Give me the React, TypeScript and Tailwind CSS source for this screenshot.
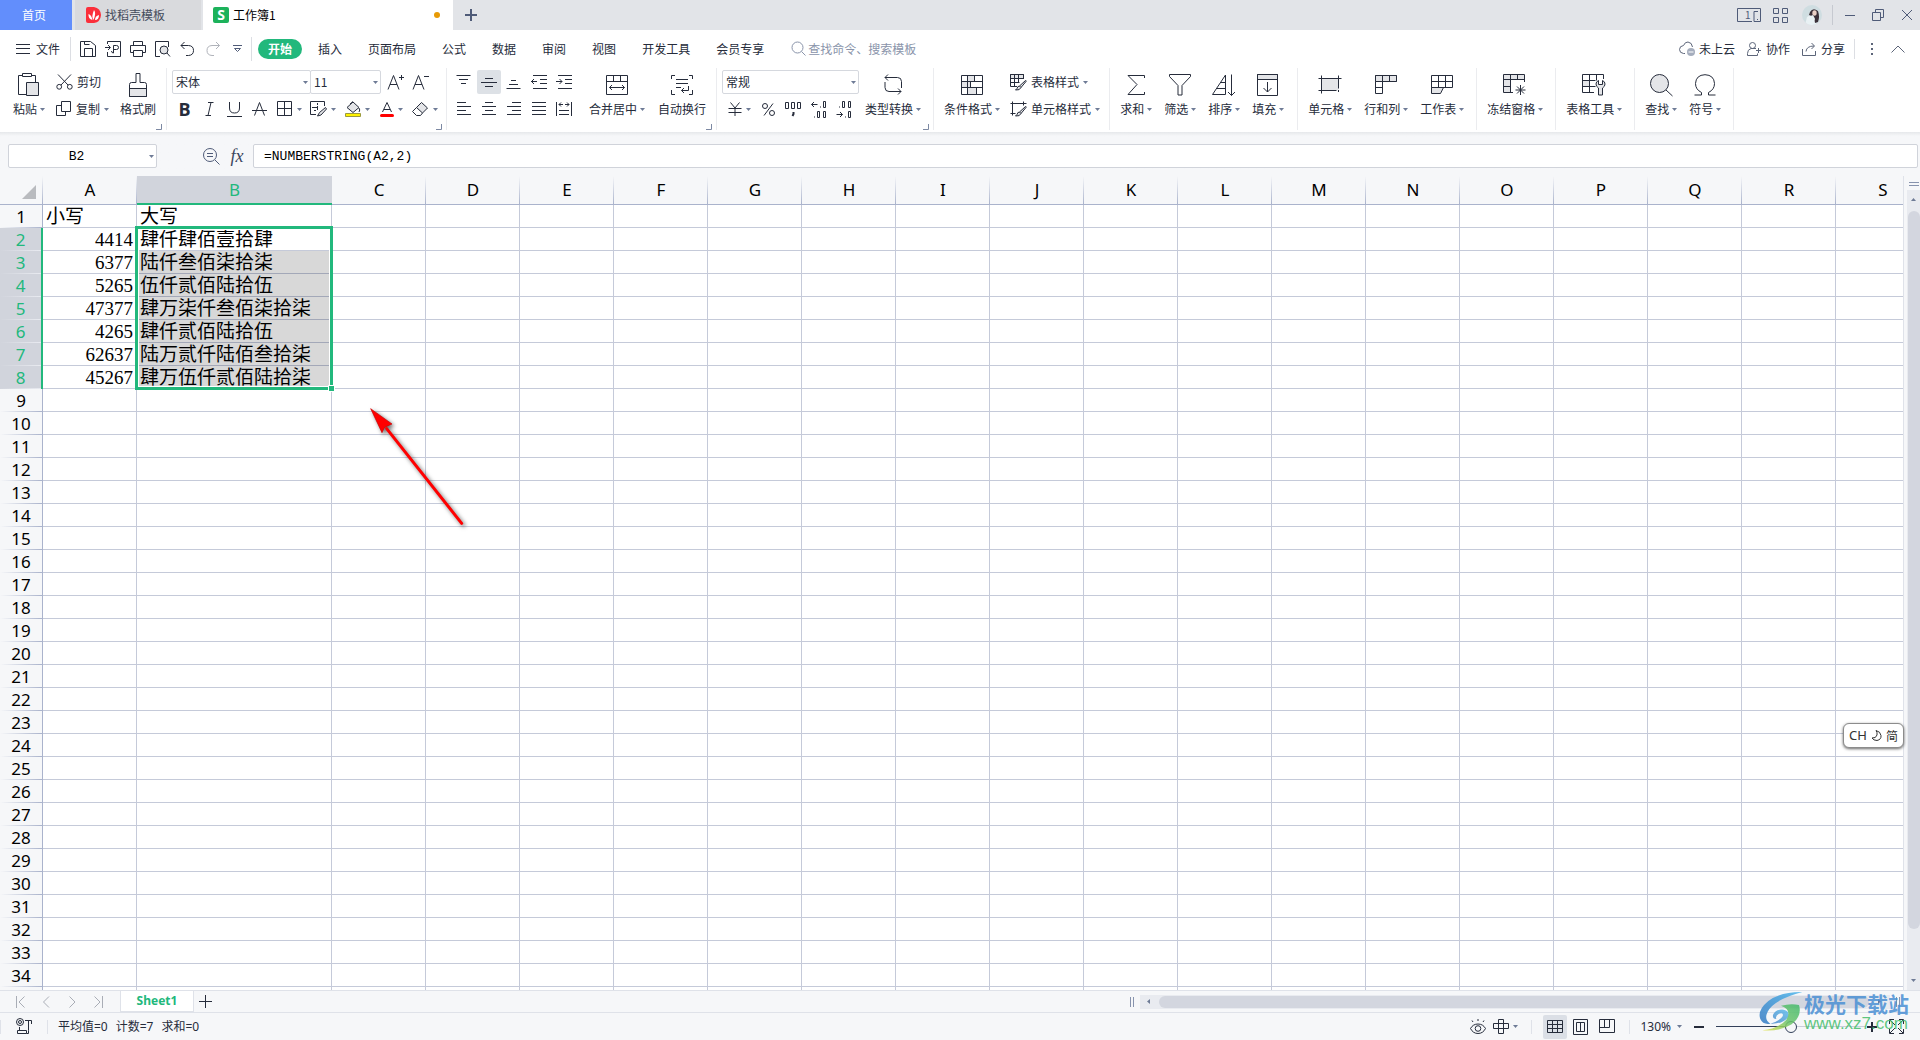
// App.tsx

import React, { useState } from "react";
import clsx from "clsx";

type IconProps = { w: number; h: number; className?: string; children: React.ReactNode };

function Icon({ w, h, className, children }: IconProps) {
  return (
    <svg
      width={w}
      height={h}
      viewBox={`0 0 ${w} ${h}`}
      fill="none"
      stroke="currentColor"
      className={clsx("shrink-0", className)}
      aria-hidden="true"
    >
      {children}
    </svg>
  );
}

const GREY = "#e4e5e8";

function Caret({ className }: { className?: string }) {
  return (
    <svg width="5" height="3" viewBox="0 0 5 3" className={clsx("shrink-0 fill-[#6e7b96]", className)} aria-hidden="true">
      <path d="M0 0h5L2.5 3z" />
    </svg>
  );
}

/* ---------- ribbon icons ---------- */

const icons = {
  paste: (
    <Icon w={22} h={24}>
      <path d="M4.5 2.5h-4v19h8M13.5 2.5h4v7" />
      <path d="M4.5 .5h9v3h-9z" />
      <path d="M8.5 9.5h12v13h-12z" fill={GREY} />
    </Icon>
  ),
  cut: (
    <Icon w={17} h={16}>
      <circle cx="3.2" cy="12.8" r="2.4" />
      <circle cx="13.8" cy="12.8" r="2.4" />
      <path d="M2 .5l10 10.5M15 .5L5 11" />
    </Icon>
  ),
  copy: (
    <Icon w={16} h={16}>
      <path d="M5.5 .5h9v10h-9zM5.5 4.5h-5v10h9v-4" />
    </Icon>
  ),
  brush: (
    <Icon w={18} h={24}>
      <path d="M.5 15.5h17v8H.5z" fill={GREY} />
      <path d="M7 .5h4v9h4.500q2 0 2 2v12H.5v-12q0-2 2-2H7z" />
    </Icon>
  ),
  merge: (
    <Icon w={22} h={20}>
      <path d="M.5 .5h21v19H.5zM.5 6.5h21M7.5 .5v6M14.5 .5v6M3.5 12.5h15M6 10l-2.5 2.5L6 15M16 10l2.5 2.5L16 15" />
    </Icon>
  ),
  wrap: (
    <Icon w={22} h={20}>
      <path d="M4 .5H.5V4M18 .5h3.5V4M4 19.5H.5V15M18 19.5h3.5V15M5 4.5h12M5 8.5h12M5 12.5h5M17.5 11v4.5h-7M13 13l-2.5 2.5L13 18" />
    </Icon>
  ),
  convert: (
    <Icon w={18} h={22}>
      <path d="M4 .5l-3 3 3 3M1 3.5h12.5q4 0 4 4V14M1 8v5.5q0 4 4 4h12M14 14.5l3 3-3 3" />
    </Icon>
  ),
  condFormat: (
    <Icon w={22} h={20}>
      <path d="M6.5 .5h7v6h-7zM.5 6.5h9v6h-9zM6.5 12.5h9v7h-9z" fill={GREY} />
      <path d="M.5 .5h21v19H.5zM.5 6.5h21M.5 12.5h21M6.5 .5v12M13.5 .5v6M9.5 6.5v6M6.5 12.5v7M15.5 12.5v7" />
    </Icon>
  ),
  tableStyle: (
    <Icon w={17} h={17}>
      <path d="M.5 .5h13v4H.5z" fill={GREY} />
      <path d="M7 12.5H.5V.5h13V5M.5 4.5h13M.5 8.5h9M4.5 .5v12M8.5 .5v8" />
      <path d="M15.5 6.5l-6 5.5 1.5 1.5 5-6q.5-1-.5-1M9.5 12q-2 0-2.5 2.5l-1.5 1.5q4.5 .5 5.5-2.5" fill={GREY} />
    </Icon>
  ),
  cellStyle: (
    <Icon w={17} h={16}>
      <path d="M.5 2.5h16M2.5 .5v14M.5 12.5h5M13.5 .5v4" />
      <path d="M15.5 5.5l-6 5.5 1.5 1.5 5-6q.5-1-.5-1M9.5 11q-2 0-2.5 2.5L5.5 15q4.5 .5 5.5-2.5" fill={GREY} />
    </Icon>
  ),
  sum: (
    <Icon w={18} h={22}>
      <path d="M17.5 4V1.5H1l9 9-9 10h16.5V18" />
    </Icon>
  ),
  filter: (
    <Icon w={22} h={22}>
      <path d="M.5 .5h21v2L13 11.5V21H9v-9.5L.5 2.5z" />
    </Icon>
  ),
  sort: (
    <Icon w={24} h={22}>
      <path d="M13.5 20.5H.5L13.5 1zM9 8.5h4.5M5 14.5h8.5M19.5 .5v21M16 18l3.5 3.5L23 18" />
    </Icon>
  ),
  fill: (
    <Icon w={22} h={22}>
      <path d="M.5 .5h20v5H.5z" fill={GREY} />
      <path d="M.5 .5h20v21H.5zM10.5 8v10M6.5 14l4 4 4-4" />
    </Icon>
  ),
  cell: (
    <Icon w={24} h={20}>
      <path d="M3.5 3.5h17v12h-17z" fill={GREY} stroke="none" />
      <path d="M.5 3.5h23M.5 15.5h18M3.5 .5v18M20.5 .5v13M20.5 15v2" />
    </Icon>
  ),
  rowCol: (
    <Icon w={22} h={20}>
      <path d="M.5 .5h21v6h-14v12h-7z" fill="#fff" />
      <path d="M.5 .5h21v6H.5z" fill={GREY} />
      <path d="M7.5 .5v6M14.5 .5v6M.5 12.5h7" />
    </Icon>
  ),
  sheet: (
    <Icon w={22} h={20}>
      <path d="M.5 12.5h12l-3 6h-9z" fill={GREY} />
      <path d="M.5 .5h21v12H.5zM.5 6.5h21M7.5 .5v12M14.5 .5v12" />
    </Icon>
  ),
  freeze: (
    <Icon w={24} h={22}>
      <path d="M.5 .5h21v5h-14v13h-7z" fill={GREY} stroke="none" />
      <path d="M10 18.5H.5V.5h21V8M.5 5.5h21M.5 12.5h7M7.5 .5v18M14.5 .5v5" />
      <path d="M17.5 11v10M12.5 16h10M14 12.5l7 7M21 12.5l-7 7" />
    </Icon>
  ),
  tableTools: (
    <Icon w={24} h={22}>
      <path d="M.5 6.5h7v6h-7z" fill={GREY} />
      <path d="M12 18.5H.5V.5h21V5M.5 6.5h13M.5 12.5h13M7.5 .5v18M14.5 .5v6" />
      <path d="M16.5 21v-7q-2.5-1.5-2.5-4t2.5-3.5v4h4v-4q2.500 1 2.500 3.500t-2.500 4v7z" fill={GREY} />
    </Icon>
  ),
  find: (
    <Icon w={23} h={23}>
      <circle cx="9.5" cy="9.5" r="9" fill={GREY} />
      <path d="M16 16l6.5 6" />
    </Icon>
  ),
  omega: (
    <Icon w={22} h={22}>
      <path d="M.5 21h7v-2.500Q1.500 15.500 1.500 9.500 2 1 11 .7q9 .3 9.500 8.800 0 6-6 9V21h7" />
    </Icon>
  ),
};

const alignIcons: [string, string][] = [
  ["顶端对齐", "M.5 1.5h14M3 5.5h9M5 9.5h5"],
  ["垂直居中", "M4 4.5h8M0 8.5h16M4 12.5h8"],
  ["底端对齐", "M5 6.5h5M3 10.5h9M.5 14.5h14"],
  ["减少缩进", "M2 1.5h14M9 5.5h7M9 9.5h7M2 14.5h14M0 7.5h6M3 5L.5 7.5 3 10"],
  ["增加缩进", "M2 1.5h14M9 5.5h7M9 9.5h7M2 14.5h14M0 7.5h6M3.5 5L6 7.5 3.5 10"],
  ["左对齐", "M1 1.5h9M1 5.5h14M1 9.5h9M1 13.5h14"],
  ["水平居中", "M4 1.5h8M1 5.5h14M4 9.5h8M1 13.5h14"],
  ["右对齐", "M6 1.5h9M1 5.5h14M6 9.5h9M1 13.5h14"],
  ["两端对齐", "M1 1.5h14M1 5.5h14M1 9.5h14M1 13.5h14"],
  ["分散对齐", "M.5 1v14M15.5 1v14M3 9.5h10M3 13.5h10M3 3.5h4M9 3.5h4M5 1.5l-2 2 2 2M11 1.5l2 2-2 2"],
];

/* ---------- ribbon building blocks ---------- */

function Group({ className, launcher, children }: { className: string; launcher?: boolean; children: React.ReactNode }) {
  return (
    <div className={clsx("relative flex h-[62px] shrink-0 items-start border-r border-[#ebecef] pt-0.5", className)}>
      {children}
      {launcher && (
        <svg width="6" height="6" className="absolute right-1 bottom-0 stroke-[#7d89a3]" fill="none" aria-hidden="true">
          <path d="M5.5 0v5.5H0" />
        </svg>
      )}
    </div>
  );
}

function BigButton({ icon, label, caret = true }: { icon: React.ReactNode; label: string; caret?: boolean }) {
  return (
    <button className="flex shrink-0 flex-col items-center">
      <span className="flex h-[30px] items-center">{icon}</span>
      <span className="flex h-[18px] items-center gap-[3px] whitespace-nowrap">
        {label}
        {caret && <Caret />}
      </span>
    </button>
  );
}

function SmallButton({ icon, label, caret = true }: { icon: React.ReactNode; label: string; caret?: boolean }) {
  return (
    <button className="flex h-6 items-center gap-1 whitespace-nowrap">
      {icon}
      {label}
      {caret && <Caret />}
    </button>
  );
}

function Tool({ label, wide, children }: { label: string; wide?: boolean; children: React.ReactNode }) {
  return (
    <button aria-label={label} className={clsx("flex h-6 shrink-0 items-center justify-center", wide ? "w-[34px] gap-1" : "w-[25px]")}>
      {children}
      {wide && <Caret />}
    </button>
  );
}

function Dropdown({ label, options, className }: { label: string; options: string[]; className: string }) {
  return (
    <div className={clsx("relative h-6", className)}>
      <select
        aria-label={label}
        className="h-6 w-full appearance-none rounded-xs border border-[#d5d8de] bg-white pl-[3px] text-xs outline-none"
      >
        {options.map((o) => (
          <option key={o}>{o}</option>
        ))}
      </select>
      <Caret className="pointer-events-none absolute top-[11px] right-[3px]" />
    </div>
  );
}

/* ---------- top bars ---------- */

function TitleBar() {
  return (
    <header className="flex h-[30px] shrink-0 items-stretch bg-[#e2e4e8] text-[#454c5c]">
      <button className="w-[72px] bg-[#628efc] pr-1 text-white">首页</button>
      <button className="ml-[3px] flex w-[126px] items-center gap-1 bg-[#d9dadd] pl-[11px]">
        <svg width="15" height="16" viewBox="0 0 15 16" aria-hidden="true">
          <path d="M0 2q0-2 2-2h6q6.500 1 7 8-.5 7-7 8H2q-2 0-2-2z" fill="#fb2f3a" />
          <path d="M7.500 13Q5 10 8 3q2.500 3-.5 10M6.500 13Q2 12 2.500 7q3 1 4 6M9 13q0-4 4-5 0 5-4 5" fill="#fff" />
        </svg>
        找稻壳模板
      </button>
      <button className="ml-0.5 flex w-[250px] items-center gap-1 bg-white pr-[13px] pl-2.5 text-black">
        <span className="flex size-4 items-center justify-center rounded-xs bg-[#1cb25b] font-['Open_Sans',sans-serif] text-sm leading-4 font-bold text-white">
          S
        </span>
        工作簿1
        <span className="ml-auto size-1.5 rounded-full bg-[#e79a05]" />
      </button>
      <button aria-label="新建" className="flex w-9 items-center justify-center">
        <Icon w={12} h={12} className="text-[#4f5b78]">
          <path d="M6 0v12M0 6h12" strokeWidth="2" />
        </Icon>
      </button>

      <div className="ml-auto flex items-center pr-2 text-[#4f5b78]">
        <button aria-label="窗口">
          <Icon w={24} h={14}>
            <path d="M15 13.5H.5V.5h23v13H17V3.500h4M20 11.500h1" />
            <text x="8" y="11" fontSize="10" fill="currentColor" stroke="none">
              1
            </text>
          </Icon>
        </button>
        <button aria-label="应用" className="ml-3">
          <Icon w={15} h={15}>
            <path d="M.5 .5h5v5h-5zM9.5 .5h5v5h-5zM.5 9.5h5v5h-5zM9.5 9.5h5v5h-5z" />
          </Icon>
        </button>
        <button aria-label="账号" className="ml-[14px] size-5 overflow-hidden rounded-full bg-[#cfdde1]">
          <svg width="20" height="20" viewBox="0 0 20 20" aria-hidden="true">
            <path d="M3 20l2-8 5-3 5 11z" fill="#e9f1f4" />
            <path d="M8 7q3-5 8-1 2 6 0 11l-3 1-1-6-5-2z" fill="#3b2f38" />
            <ellipse cx="12.5" cy="8" rx="2.2" ry="2.8" fill="#eacfc5" />
            <path d="M6 12l5-2 2 4-3 6H5z" fill="#e9f1f4" />
          </svg>
        </button>
        <span className="mr-3 ml-[10px] h-5 w-px bg-[#c6c9d0]" />
        <button aria-label="最小化">
          <Icon w={10} h={12}>
            <path d="M0 6.5h10" />
          </Icon>
        </button>
        <button aria-label="还原" className="ml-[17px]">
          <Icon w={12} h={12}>
            <path d="M.5 3.5h8v8h-8zM3.5 3.5v-3h8v8h-3" />
          </Icon>
        </button>
        <button aria-label="关闭" className="ml-[18px]">
          <Icon w={10} h={10}>
            <path d="M0 0l10 10M10 0L0 10" />
          </Icon>
        </button>
      </div>
    </header>
  );
}

const menuTabs = ["开始", "插入", "页面布局", "公式", "数据", "审阅", "视图", "开发工具", "会员专享"];

const quickIcons: [string, string][] = [
  ["保存", "M.5 .5h10l5 4v11H.5zM4.5 15.5v-8h8v8M4.5 .5v3h5"],
  ["输出", "M2.5 3V.5h13v15h-13V11M0 6.5h5M3 4l2.5 2.5L3 9M8.5 12V4.5h3q2 0 2 2t-2 2h-3M6.5 10q0 2 2 2"],
  ["打印", "M3.5 4.5v-4h9v4M3.5 11.5h-3v-7h15v7h-3M3.5 9.5h9v6h-9z"],
];

function MenuBar({ active, onChange }: { active: string; onChange: (tab: string) => void }) {
  return (
    <nav className="flex h-[37px] shrink-0 items-center whitespace-nowrap">
      <button className="flex items-center gap-1.5 pl-4">
        <Icon w={14} h={10}>
          <path d="M0 .5h14M0 4.5h14M0 9.5h14" />
        </Icon>
        文件
      </button>
      <span className="ml-2.5 h-6 w-px bg-[#dcdee3]" />
      <div className="ml-[9px] flex items-center gap-[9px]">
        {quickIcons.map(([name, d]) => (
          <button key={name} aria-label={name}>
            <Icon w={16} h={16}>
              <path d={d} />
            </Icon>
          </button>
        ))}
        <button aria-label="打印预览">
          <Icon w={16} h={16}>
            <path d="M5 15.5H.5V.5h13V6M12 12l3 3.5" />
            <circle cx="9" cy="9" r="4" fill={GREY} />
          </Icon>
        </button>
        <button aria-label="撤销">
          <Icon w={16} h={16}>
            <path d="M4.5 1L1 4.5 4.5 8M1 4.5h7.500q5 .3 5 5t-5 5H6" />
          </Icon>
        </button>
        <button aria-label="恢复" className="text-[#b0b3ba]">
          <Icon w={16} h={16}>
            <path d="M11 1l3.5 3.5L11 8M14.5 4.5H7q-5 .3-5 5t5 5h2" />
          </Icon>
        </button>
        <button aria-label="自定义" className="pl-[3px] text-[#4f5b78]">
          <Icon w={9} h={8}>
            <path d="M0 .5h9M1.5 3.5l3 3 3-3z" />
          </Icon>
        </button>
      </div>
      <span className="ml-[9px] h-6 w-px bg-[#dcdee3]" />
      <div className="ml-1.5 flex items-center">
        {menuTabs.map((tab) => (
          <button
            key={tab}
            onClick={() => onChange(tab)}
            className={clsx(
              "h-5 shrink-0",
              tab === active ? "mr-[3px] rounded-full bg-[#22b87c] px-2.5 font-bold text-white" : "px-[13px]"
            )}
          >
            {tab}
          </button>
        ))}
      </div>
      <label className="ml-[14px] flex items-center gap-0.5 text-[#8a94aa]">
        <Icon w={15} h={15}>
          <circle cx="6.5" cy="6.5" r="5.5" />
          <path d="M10.5 10.5l4 4" />
        </Icon>
        <input
          aria-label="查找命令"
          placeholder="查找命令、搜索模板"
          className="h-5 w-[120px] bg-transparent text-xs outline-none placeholder:text-[#8a94aa]"
        />
      </label>

      <div className="ml-auto flex items-center">
        <button className="flex items-center gap-1">
          <Icon w={16} h={16} className="text-[#5c6579]">
            <path d="M6 12.5H4.500q-4-.5-4-4t4-4Q6 .8 9 1q4 .5 4.500 5" />
            <circle cx="12" cy="11" r="4" fill="#a5adbd" stroke="none" />
            <path d="M9.5 11h5" stroke="#fff" />
          </Icon>
          未上云
        </button>
        <button className="ml-3 flex items-center gap-1">
          <Icon w={15} h={14} className="text-[#5c6579]">
            <circle cx="5.5" cy="3.5" r="3" />
            <path d="M9 6.5H4q-3.500 1-3.500 5v2h10v-2M9 8.5h5M11.500 6v5" />
          </Icon>
          协作
        </button>
        <button className="ml-3 flex items-center gap-1">
          <Icon w={15} h={14} className="text-[#5c6579]">
            <path d="M.5 7v6.5h13V9M4 9.5q.5-5.500 8-5.500M9.5 1l3 3-3 3" />
          </Icon>
          分享
        </button>
        <span className="ml-[9px] h-5 w-px bg-[#dcdee3]" />
        <button aria-label="更多" className="ml-4">
          <Icon w={2} h={12} className="text-[#5c6579]">
            <path d="M1 0v2M1 5v2M1 10v2" strokeWidth="2" />
          </Icon>
        </button>
        <button aria-label="折叠功能区" className="mr-[15px] ml-[18px]">
          <Icon w={14} h={8} className="text-[#5c6579]">
            <path d="M.5 7.5L7 1l6.500 6.500" />
          </Icon>
        </button>
      </div>
    </nav>
  );
}

function Ribbon() {
  return (
    <section className="flex h-[65px] shrink-0 pt-px whitespace-nowrap">
      <Group className="gap-[11px] pr-[10px] pl-[13px]" launcher>
        <BigButton icon={icons.paste} label="粘贴" />
        <div className="flex flex-col gap-[3px]">
          <SmallButton icon={icons.cut} label="剪切" caret={false} />
          <SmallButton icon={icons.copy} label="复制" />
        </div>
        <BigButton icon={icons.brush} label="格式刷" caret={false} />
      </Group>

      <Group className="pr-1 pl-[5px]" launcher>
        <div className="flex flex-col gap-[3px]">
          <div className="flex">
            <Dropdown label="字体" options={["宋体", "微软雅黑"]} className="w-[139px]" />
            <Dropdown label="字号" options={["11", "12", "14"]} className="-ml-px w-[71px]" />
            <div className="ml-0.5 flex">
              <Tool label="增大字号">
                <Icon w={17} h={16}>
                  <path d="M1 15.5L6.500 1.500l5.500 14M3 10.5h7M14.5 1v5M12 3.5h5" />
                </Icon>
              </Tool>
              <Tool label="减小字号">
                <Icon w={17} h={16}>
                  <path d="M1 15.5L6.500 1.500l5.500 14M3 10.5h7M12 2.5h5" />
                </Icon>
              </Tool>
            </div>
          </div>
          <div className="flex">
            <Tool label="加粗">
              <span className="font-['Open_Sans',sans-serif] text-lg leading-6 font-bold">B</span>
            </Tool>
            <Tool label="倾斜">
              <Icon w={9} h={14}>
                <path d="M3 .5h5.500M.5 13.5H6M6 .5L3 13.5" />
              </Icon>
            </Tool>
            <Tool label="下划线">
              <Icon w={15} h={15}>
                <path d="M2.5 0v6q0 5 5 5t5-5V0M0 14.5h15" />
              </Icon>
            </Tool>
            <Tool label="删除线">
              <Icon w={15} h={14}>
                <path d="M2.5 13.5L7.500 .5l5 13M0 8.5h15" />
              </Icon>
            </Tool>
            <Tool label="边框" wide>
              <Icon w={16} h={16}>
                <path d="M.5 .5h14v14H.5zM.5 7.5h14M7.5 .5v14" />
              </Icon>
            </Tool>
            <Tool label="填充图案" wide>
              <Icon w={17} h={16}>
                <path d="M6 13.5H.5V.5h14V5M2 6.5h6M7.5 2v2M7.5 5v4M4 9.5h2" />
                <path d="M15.5 6.5l-6 5-2 3.500 3.500-1 5.500-6z" fill={GREY} />
              </Icon>
            </Tool>
            <Tool label="填充颜色" wide>
              <Icon w={16} h={16}>
                <path d="M8 1l6 5.500-6 5-6-5z" fill={GREY} />
                <path d="M5 3l3-2.500M14 7q1.500 2 0 4" />
                <path d="M.5 12.5h15v3H.5z" fill="#fff200" stroke="#9a9a40" />
              </Icon>
            </Tool>
            <Tool label="字体颜色" wide>
              <Icon w={14} h={15}>
                <path d="M2.5 10L7 .5l4.500 9.500M4 7.5h6" />
                <path d="M1.5 13.5h11" stroke="#f00" strokeWidth="3" strokeLinecap="round" />
              </Icon>
            </Tool>
            <Tool label="清除" wide>
              <Icon w={17} h={16}>
                <path d="M9.5 1.500l6 5.500-5 5-6-5.500z" fill={GREY} />
                <path d="M4.5 6.5l-4 4 4 4h4l2-2.500" />
              </Icon>
            </Tool>
          </div>
        </div>
      </Group>

      <Group className="gap-[13px] pr-2.5 pl-[5px]" launcher>
        <div className="grid grid-cols-5 gap-x-px gap-y-[3px]">
          {alignIcons.map(([name, d], i) => (
            <button
              key={name}
              aria-label={name}
              className={clsx("flex size-6 items-center justify-center rounded-xs", i === 1 && "bg-[#dde1e6]")}
            >
              <Icon w={16} h={16}>
                <path d={d} />
              </Icon>
            </button>
          ))}
        </div>
        <BigButton icon={icons.merge} label="合并居中" />
        <BigButton icon={icons.wrap} label="自动换行" caret={false} />
      </Group>

      <Group className="gap-1.5 pr-3 pl-[5px]" launcher>
        <div className="flex flex-col gap-[3px]">
          <Dropdown label="数字格式" options={["常规", "数值", "货币"]} className="w-[137px]" />
          <div className="flex">
            <Tool label="货币" wide>
              <Icon w={14} h={14}>
                <path d="M2.5 .5L7 6l4.500-5.500M.5 6.5h13M.5 10.5h13M7 6v8" />
              </Icon>
            </Tool>
            <Tool label="百分比">
              <Icon w={13} h={13}>
                <circle cx="3" cy="3" r="2.5" />
                <circle cx="10" cy="10" r="2.5" />
                <path d="M11 .5l-9 12" />
              </Icon>
            </Tool>
            <Tool label="千位分隔">
              <Icon w={17} h={15}>
                <path d="M.5 .5h3v6h-3zM6.5 .5h3v6h-3zM12.5 .5h3v6h-3z" />
                <path d="M8.5 10v2l-1 2" strokeWidth="2" />
              </Icon>
            </Tool>
            <Tool label="增加小数位">
              <Icon w={16} h={17}>
                <path d="M12.5 .5h2v6h-2zM6.5 10.5h2v6h-2zM12.5 10.5h2v6h-2zM.5 3.5h6M3 1L.5 3.5 3 6M9.5 5.5v1M3.5 15.5v1" />
              </Icon>
            </Tool>
            <Tool label="减少小数位">
              <Icon w={16} h={17}>
                <path d="M6.5 .5h2v6h-2zM12.5 .5h2v6h-2zM12.5 10.5h2v6h-2zM.5 13.5h6M4 11l2.500 2.500L4 16M9.5 15.5v1M3.5 5.5v1" />
              </Icon>
            </Tool>
          </div>
        </div>
        <BigButton icon={icons.convert} label="类型转换" />
      </Group>

      <Group className="gap-2.5 pr-[9px] pl-2.5">
        <BigButton icon={icons.condFormat} label="条件格式" />
        <div className="flex flex-col gap-[3px]">
          <SmallButton icon={icons.tableStyle} label="表格样式" />
          <SmallButton icon={icons.cellStyle} label="单元格样式" />
        </div>
      </Group>

      <Group className="gap-3 pr-[13px] pl-2.5">
        <BigButton icon={icons.sum} label="求和" />
        <BigButton icon={icons.filter} label="筛选" />
        <BigButton icon={icons.sort} label="排序" />
        <BigButton icon={icons.fill} label="填充" />
      </Group>

      <Group className="gap-3 pr-3 pl-2.5">
        <BigButton icon={icons.cell} label="单元格" />
        <BigButton icon={icons.rowCol} label="行和列" />
        <BigButton icon={icons.sheet} label="工作表" />
      </Group>

      <Group className="pr-3 pl-2.5">
        <BigButton icon={icons.freeze} label="冻结窗格" />
      </Group>

      <Group className="pr-3 pl-2.5">
        <BigButton icon={icons.tableTools} label="表格工具" />
      </Group>

      <Group className="gap-3 pr-3 pl-2.5">
        <BigButton icon={icons.find} label="查找" />
        <BigButton icon={icons.omega} label="符号" />
      </Group>
    </section>
  );
}

function FormulaBar() {
  return (
    <div className="flex h-[44px] shrink-0 items-center bg-linear-to-b from-[#e6e8eb] to-[#f6f7f9] to-[4px] pt-1 pr-0.5 pl-2 font-['Liberation_Mono',monospace]">
      <div className="relative h-6 w-[149px] shrink-0">
        <input
          aria-label="名称框"
          defaultValue="B2"
          className="h-6 w-full rounded-xs border border-[#d0d3da] bg-white pr-3 text-center text-[13px] text-black outline-none"
        />
        <Caret className="pointer-events-none absolute top-[11px] right-[3px]" />
      </div>
      <button aria-label="缩小" className="ml-[46px] text-[#4f5b78]">
        <Icon w={17} h={17}>
          <circle cx="7" cy="7" r="6.5" />
          <path d="M12 12l4.500 4.500M4 5.5h6M4 8.5h6" />
        </Icon>
      </button>
      <button
        aria-label="插入函数"
        className="ml-[9px] w-4 font-['Liberation_Serif',serif] text-lg leading-5 text-[#3c465e] italic"
      >
        fx
      </button>
      <input
        aria-label="编辑栏"
        defaultValue="=NUMBERSTRING(A2,2)"
        className="ml-2 h-6 min-w-0 flex-1 rounded-xs border border-[#d0d3da] bg-white pl-2.5 text-[13px] text-black outline-none"
      />
    </div>
  );
}

/* ---------- sheet ---------- */

const columns = "ABCDEFGHIJKLMNOPQRS".split("");

const data: [string, string][] = [
  ["小写", "大写"],
  ["4414", "肆仟肆佰壹拾肆"],
  ["6377", "陆仟叁佰柒拾柒"],
  ["5265", "伍仟贰佰陆拾伍"],
  ["47377", "肆万柒仟叁佰柒拾柒"],
  ["4265", "肆仟贰佰陆拾伍"],
  ["62637", "陆万贰仟陆佰叁拾柒"],
  ["45267", "肆万伍仟贰佰陆拾柒"],
];

const ROWS = 34;

function Grid() {
  return (
    <table className="w-[1930px] table-fixed border-separate border-spacing-0 text-black">
      <colgroup>
        <col className="w-[43px]" />
        {columns.map((c) => (
          <col key={c} className={c === "B" ? "w-[195px]" : "w-[94px]"} />
        ))}
      </colgroup>
      <thead>
        <tr className="h-[29px] font-['Noto_Sans',sans-serif] text-[17px] leading-6">
          <th className="border-b border-[#aab3cc] bg-[#f6f7f9] bg-linear-to-b from-transparent to-[#aab3cc] bg-[length:1px_100%] bg-right bg-no-repeat p-0">
            <svg width="14" height="14" className="mt-1 ml-[22px] fill-[#b9bbbf]" aria-hidden="true">
              <path d="M14 0v14H0z" />
            </svg>
          </th>
          {columns.map((c) => (
            <th
              key={c}
              scope="col"
              className={clsx(
                "p-0 font-normal",
                c === "B"
                  ? "border-b-2 border-[#22b87c] bg-[#d1d4dc] text-[#22b87c]"
                  : "border-b border-[#aab3cc] bg-[#f6f7f9] bg-linear-to-b from-transparent to-[#aab3cc] bg-[length:1px_100%] bg-right bg-no-repeat"
              )}
            >
              {c}
            </th>
          ))}
        </tr>
      </thead>
      <tbody className="font-['Liberation_Serif','Noto_Sans_CJK_SC',serif] text-[19px] leading-5">
        {/* one blank row past the last number fills the strip above the sheet tabs */}
        {Array.from({ length: ROWS + 1 }, (_, r) => {
          const selected = r >= 1 && r <= 7;
          return (
            <tr key={r} className="h-[23px]">
              <th
                scope="row"
                className={clsx(
                  "bg-linear-to-r from-transparent bg-[length:100%_1px] bg-bottom bg-no-repeat p-0 font-['Noto_Sans',sans-serif] text-[17px] font-normal",
                  selected
                    ? "border-r-2 border-[#22b87c] bg-[#d1d4dc] to-[#e8eaf0] text-[#22b87c]"
                    : "border-r border-[#aab3cc] bg-[#f6f7f9] to-[#aab3cc]"
                )}
              >
                {r < ROWS && r + 1}
              </th>
              {columns.map((c, i) => (
                <td
                  key={c}
                  className={clsx(
                    "overflow-hidden border-r border-b pt-0.5 pb-0 whitespace-nowrap",
                    c === "A" && r > 0 ? "pr-[3px] text-right" : "pl-[3px]",
                    c === "B" && r > 1 && selected ? "border-[#a3a8b8] bg-[#d8d8d8]" : "border-[#c5cad9]"
                  )}
                >
                  {i < 2 && data[r]?.[i]}
                </td>
              ))}
            </tr>
          );
        })}
      </tbody>
    </table>
  );
}

function Sheet() {
  return (
    <main className="flex min-h-0 flex-1 bg-[#f6f7f9]">
      <div className="relative min-w-0 flex-1 overflow-hidden bg-white">
        <Grid />

        {/* selection frame with its fill handle */}
        <div className="pointer-events-none absolute top-[50px] left-[135px] h-[164px] w-[198px] border-3 border-[#22b87c] shadow-[inset_0_0_0_1px_#fff]">
          <span className="absolute -right-[5px] -bottom-[5px] size-[7px] border border-white bg-[#22b87c]" />
        </div>

        {/* pointer arrow */}
        <svg
          width="140"
          height="150"
          viewBox="0 0 420 450"
          className="pointer-events-none absolute top-[214px] left-[350px] drop-shadow-[2px_2px_2px_rgba(0,0,0,0.6)]"
          aria-hidden="true"
        >
          <path d="M110 116l225 284" stroke="#f00" strokeWidth="9" strokeLinecap="round" />
          <path d="M62 56l64 46-19 8-5 5-6 13z" fill="#f00" stroke="#c00" strokeWidth="2" />
        </svg>
      </div>

      <div className="flex w-[17px] shrink-0 flex-col items-end border-l border-[#dfe2e9]">
        <div className="flex h-[14px] w-[13px] items-end justify-center pb-1">
          <Icon w={10} h={4} className="text-[#8793ad]">
            <path d="M0 .5h10M0 3.5h10" />
          </Icon>
        </div>
        <div className="flex w-[13px] flex-1 flex-col items-center bg-[#e9ebf0]">
          <Caret className="mt-2 rotate-180" />
          <div className="mt-2.5 w-3 flex-1 rounded-full bg-[#d3d6df]" />
          <Caret className="mt-[50px] mb-2" />
        </div>
      </div>
    </main>
  );
}

/* ---------- bottom bars ---------- */

const sheetNav: [string, string][] = [
  ["第一张", "M1.5 0v12M9.5 .5L4 6l5.500 5.500"],
  ["上一张", "M8 .5L2.500 6 8 11.500"],
  ["下一张", "M2.5 .5L8 6l-5.500 5.500"],
  ["最后一张", "M1.5 .5L7 6l-5.500 5.500M9.5 0v12"],
];

function SheetTabs() {
  return (
    <div className="flex h-[23px] shrink-0 items-stretch border-y border-[#dfe2e9] bg-[#f6f7f9]">
      <div className="flex items-center gap-[15px] pr-[16px] pl-[15px] text-[#a9adb6]">
        {sheetNav.map(([name, d]) => (
          <button key={name} aria-label={name}>
            <Icon w={11} h={12}>
              <path d={d} />
            </Icon>
          </button>
        ))}
      </div>
      <button className="w-[74px] border-x border-b border-[#dfe2e9] bg-white font-['Noto_Sans',sans-serif] text-xs font-bold text-[#22b87c]">
        Sheet1
      </button>
      <button aria-label="新建工作表" className="pl-[5px]">
        <Icon w={13} h={13}>
          <path d="M6.5 0v13M0 6.5h13" />
        </Icon>
      </button>
      <div className="ml-[918px] flex min-w-0 flex-1 items-center pr-5">
        <span className="h-2.5 w-1 shrink-0 border-x border-[#8793ad]" />
        <div className="ml-1.5 flex h-[14px] flex-1 items-center bg-[#e9ebf0]">
          <Caret className="ml-[6px] rotate-90" />
          <div className="ml-2 h-3 flex-1 rounded-full bg-[#d3d6df]" />
          <Caret className="mx-2 -rotate-90" />
        </div>
        <span className="ml-1.5 h-2.5 w-1 shrink-0 border-x border-[#8793ad]" />
      </div>
    </div>
  );
}

function StatusBar() {
  const [zoom, setZoom] = useState(50);

  return (
    <footer className="flex h-[27px] shrink-0 items-center bg-[#f6f7f9] font-['Noto_Sans','Noto_Sans_CJK_SC',sans-serif] whitespace-nowrap">
      <span className="h-[14px] w-px bg-[#dfe2e9]" />
      <button aria-label="宏" className="ml-[15px]">
        <Icon w={17} h={17}>
          <circle cx="4" cy="4" r="3.5" />
          <circle cx="4" cy="4" r="1.5" />
          <path d="M9 2.5h6.500V6M12.5 2.5v10M3.5 9v3.500M1.5 12.5h9v3h-9zM12.5 12.5v3h-2" />
        </Icon>
      </button>
      <span className="ml-[14px] h-[14px] w-px bg-[#dfe2e9]" />
      <div className="ml-2.5 flex gap-2">
        <span>平均值=0</span>
        <span>计数=7</span>
        <span>求和=0</span>
      </div>

      <div className="mr-4 ml-auto flex items-center">
        <button aria-label="护眼模式">
          <Icon w={16} h={15}>
            <path d="M.5 9.5Q3 5 8 5t7.500 4.500Q13 14.500 8 14.500T.5 9.500zM8 0v2M2 1.500l1 1.500M14 1.500L13 3" />
            <circle cx="8" cy="9.5" r="2.8" />
          </Icon>
        </button>
        <button aria-label="阅读模式" className="ml-[7px] flex items-center gap-1">
          <Icon w={16} h={15}>
            <path d="M5.5 .5h5v14h-5zM.5 4.5h15v5H.5z" />
          </Icon>
          <Caret />
        </button>
        <span className="mr-[11px] ml-[13px] h-[14px] w-px bg-[#dfe2e9]" />
        <button aria-label="普通视图" className="flex size-6 items-center justify-center rounded-xs bg-[#dbdfe6]">
          <Icon w={16} h={14}>
            <path d="M.5 .5h15v12H.5zM.5 4.5h15M.5 8.5h15M5.5 .5v12M10.5 .5v12" />
          </Icon>
        </button>
        <button aria-label="页面布局" className="ml-1.5">
          <Icon w={15} h={16}>
            <path d="M.5 .5h14v15H.5zM3.5 3.5h8v9h-8zM7.5 3.5v9" />
          </Icon>
        </button>
        <button aria-label="分页预览" className="ml-[11px]">
          <Icon w={16} h={15}>
            <path d="M.5 .5h15v13H.5zM.5 8.5h10v-8M5.5 .5v8" />
          </Icon>
        </button>
        <span className="mr-2.5 ml-[14px] h-[14px] w-px bg-[#dfe2e9]" />
        <button className="flex items-center gap-1.5">
          130%
          <Caret />
        </button>
        <button aria-label="缩小" className="ml-3">
          <Icon w={10} h={10}>
            <path d="M0 5h10" strokeWidth="2" />
          </Icon>
        </button>
        <input
          type="range"
          aria-label="显示比例"
          value={zoom}
          onChange={(e) => setZoom(Number(e.target.value))}
          className="mr-px ml-3 h-px w-[150px] appearance-none bg-linear-to-r from-[#33405a] from-50% to-[#c9ced9] to-50% outline-none [&::-webkit-slider-thumb]:size-3 [&::-webkit-slider-thumb]:appearance-none [&::-webkit-slider-thumb]:rounded-full [&::-webkit-slider-thumb]:border [&::-webkit-slider-thumb]:border-[#33405a] [&::-webkit-slider-thumb]:bg-[#f6f7f9]"
        />
        <button aria-label="放大">
          <Icon w={10} h={10}>
            <path d="M0 5h10M5 0v10" strokeWidth="2" />
          </Icon>
        </button>
        <button aria-label="全屏" className="ml-3">
          <Icon w={15} h={15}>
            <path d="M.5 5V.5H5M10 .5h4.500V5M14.5 10v4.500H10M5 14.5H.5V10M1 1l5 5M14 1L9 6M14 14L9 9M1 14l5-5" />
          </Icon>
        </button>
      </div>
    </footer>
  );
}

/* ---------- floating things ---------- */

function ImeBadge() {
  return (
    <div className="absolute top-[723px] right-4 flex h-[25px] w-[61px] items-center justify-center gap-1 rounded-md border border-[#8c8c8c] bg-white text-xs text-[#333] shadow-[0_1px_3px_rgba(0,0,0,0.6)]">
      <span className="font-['Noto_Sans',sans-serif] text-[13px]">CH</span>
      <Icon w={11} h={11}>
        <path d="M5 .5q4.500 1 5 5t-4 5q-3.500 0-5-2.500 4 .5 5-3 .5-2.500-1-4.500z" />
      </Icon>
      <span>简</span>
    </div>
  );
}

function Watermark() {
  return (
    <div className="pointer-events-none absolute right-2.5 bottom-[7px] flex items-start gap-px">
      <svg width="44" height="42" viewBox="0 0 132 126" aria-hidden="true">
        <defs>
          <linearGradient id="wmBlue" x1="0" y1="1" x2="1" y2="0">
            <stop offset="0" stopColor="#3d7fc4" />
            <stop offset="1" stopColor="#55b9ec" />
          </linearGradient>
          <linearGradient id="wmGreen" x1="0" y1="1" x2="1" y2="0">
            <stop offset="0" stopColor="#e9e34a" />
            <stop offset="0.5" stopColor="#6cc46a" />
            <stop offset="1" stopColor="#41b96b" />
          </linearGradient>
        </defs>
        {/* outer blue sweep curling into the middle */}
        <path
          d="M130 3Q66 2 28 30-6 58 4 84q8 18 30 14-20-12-8-36Q44 26 130 3z"
          fill="url(#wmBlue)"
          opacity="0.9"
        />
        <path
          d="M34 98q34 2 52-18 10-18-12-24-26-2-32 16-2 12 10 12-4-10 8-16 12-4 12 4-2 14-38 26z"
          fill="url(#wmBlue)"
          opacity="0.8"
        />
        {/* green tail */}
        <path d="M66 44q30-8 54-2 10 34-22 58-34 22-88 18 50-6 72-32 18-30-16-42z" fill="url(#wmGreen)" opacity="0.85" />
      </svg>
      <div className="w-[106px] whitespace-nowrap">
        <div className="text-[21px] leading-6 font-bold text-[#4a8fd4]/85">极光下载站</div>
        <div className="font-['Liberation_Sans',sans-serif] text-[17px] leading-[18px] text-[#43bd6a]/85">www.xz7.com</div>
      </div>
    </div>
  );
}

export default function App() {
  const [tab, setTab] = useState("开始");

  return (
    <div className="relative flex h-screen flex-col overflow-hidden bg-white font-['Noto_Sans_CJK_SC',sans-serif] text-xs text-[#262c3b]">
      <TitleBar />
      <MenuBar active={tab} onChange={setTab} />
      <Ribbon />
      <FormulaBar />
      <Sheet />
      <SheetTabs />
      <StatusBar />
      <ImeBadge />
      <Watermark />
    </div>
  );
}
